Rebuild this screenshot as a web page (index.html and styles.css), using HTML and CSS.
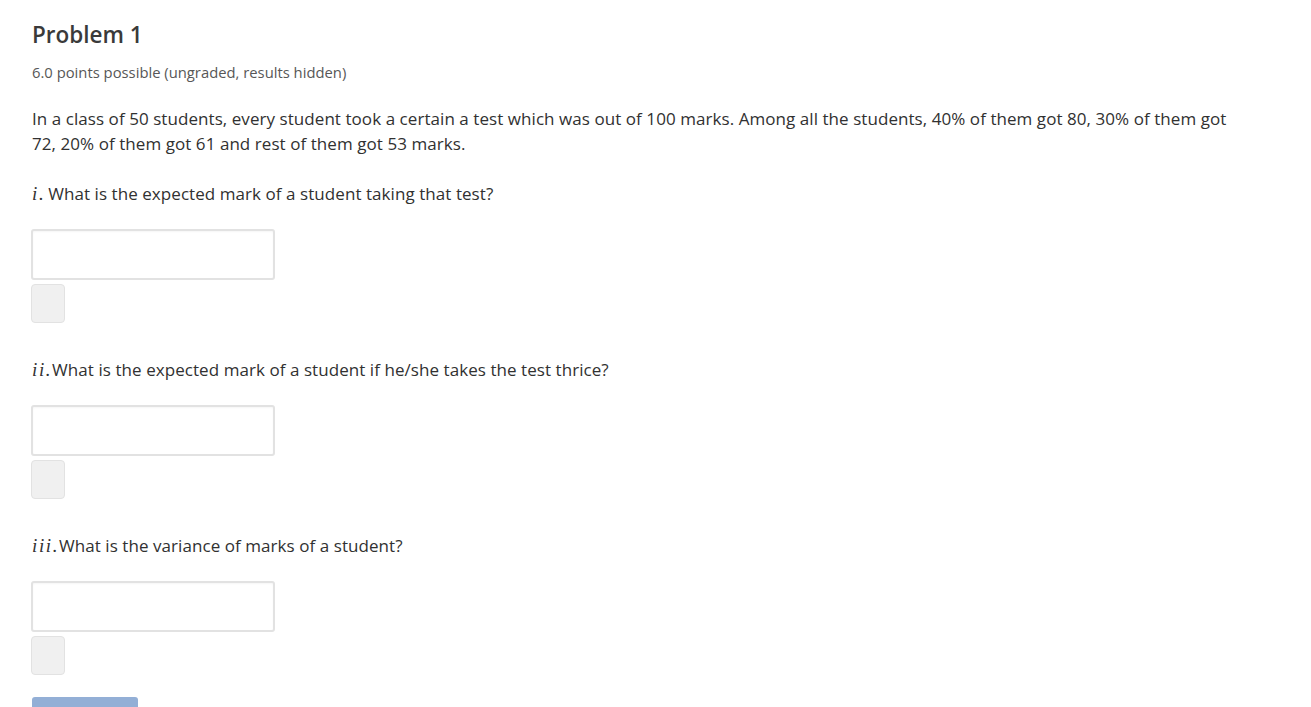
FILE: index.html
```html
<!DOCTYPE html>
<html lang="en">
<head>
<meta charset="utf-8">
<title>Problem 1</title>
<link rel="stylesheet" href="styles.css">
</head>
<body>
<div class="problem">
  <h3 class="title">Problem 1</h3>
  <div class="points">6.0 points possible (ungraded, results hidden)</div>
  <p class="statement">In a class of 50 students, every student took a certain a test which was out of 100 marks. Among all the students, 40% of them got 80, 30% of them got 72, 20% of them got 61 and rest of them got 53 marks.</p>

  <div class="question">
    <p class="qtext"><span class="math math-gap">i.</span>What is the expected mark of a student taking that test?</p>
    <input class="answer" type="text" aria-label="answer i">
    <div class="status"></div>
  </div>

  <div class="question">
    <p class="qtext"><span class="math">ii.</span>What is the expected mark of a student if he/she takes the test thrice?</p>
    <input class="answer" type="text" aria-label="answer ii">
    <div class="status"></div>
  </div>

  <div class="question">
    <p class="qtext"><span class="math">iii.</span>What is the variance of marks of a student?</p>
    <input class="answer" type="text" aria-label="answer iii">
    <div class="status"></div>
  </div>

  <div class="actions">
    <button class="submit" type="button"></button>
  </div>
</div>
</body>
</html>
```
FILE: styles.css
```css
html, body {
  margin: 0;
  padding: 0;
  background: #ffffff;
  overflow: hidden;
}
body {
  font-family: "Open Sans", "Liberation Sans", sans-serif;
  color: #313131;
}
.problem {
  padding: 20px 40px 0 32px;
  width: 1210px;
}
.title {
  margin: 0;
  font-size: 22.5px;
  line-height: 29px;
  font-weight: 600;
  color: #3a3a3a;
}
.points {
  margin-top: 13px;
  font-size: 14.8px;
  line-height: 20px;
  color: #575757;
}
.statement {
  margin: 23.5px 0 0;
  font-size: 17px;
  line-height: 25px;
  letter-spacing: 0.06px;
}
.question {
  margin-top: 25px;
  display: flex;
  flex-direction: column;
  align-items: flex-start;
}
.question + .question {
  margin-top: 33.5px;
}
.qtext {
  margin: 0;
  font-size: 17px;
  line-height: 25px;
  letter-spacing: 0.06px;
}
.math {
  font-family: "Liberation Serif", "DejaVu Serif", serif;
  font-style: italic;
  font-size: 19px;
  letter-spacing: 1.6px;
}
.math-gap {
  margin-right: 3px;
}
.answer {
  margin: 23.5px 0 0 -1px;
  box-sizing: border-box;
  width: 244px;
  height: 51px;
  border: 2px solid #e2e2e2;
  border-radius: 3px;
  background: #fff;
  box-shadow: inset 0 1px 2px rgba(0,0,0,0.04);
  outline: none;
}
.status {
  margin: 4px 0 0 -1px;
  box-sizing: border-box;
  width: 34px;
  height: 39px;
  background: #f0f0f0;
  border: 1px solid #e2e2e2;
  border-radius: 4px;
}
.actions {
  margin-top: 22px;
}
.submit {
  display: block;
  width: 106px;
  height: 40px;
  border: 0;
  border-radius: 3px;
  background: #93afd6;
  padding: 0;
}
```
